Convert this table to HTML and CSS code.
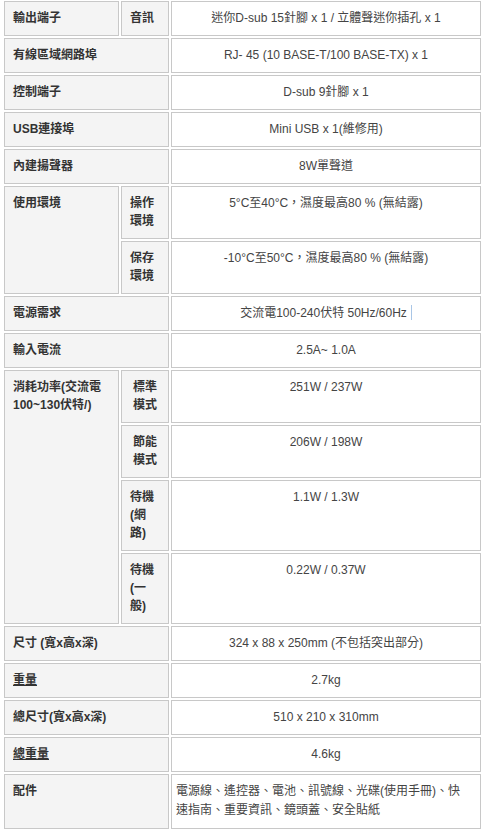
FILE: index.html
```html
<!DOCTYPE html>
<html lang="zh-Hant">
<head>
  <meta charset="UTF-8">
  <title>規格</title>
  <meta name="viewport" content="width=device-width, initial-scale=1.0">
  <link rel="stylesheet" href="styles.css">
</head>
<body>
  <table class="spec">
    <colgroup>
      <col class="c1">
      <col class="c2">
      <col>
    </colgroup>
    <tbody>
      <tr>
        <th>輸出端子</th>
        <th>音訊</th>
        <td>迷你D-sub 15針腳 x 1 / 立體聲迷你插孔 x 1</td>
      </tr>
      <tr>
        <th colspan="2">有線區域網路埠</th>
        <td>RJ- 45 (10 BASE-T/100 BASE-TX) x 1</td>
      </tr>
      <tr>
        <th colspan="2">控制端子</th>
        <td>D-sub 9針腳 x 1</td>
      </tr>
      <tr>
        <th colspan="2">USB連接埠</th>
        <td>Mini USB x 1(維修用)</td>
      </tr>
      <tr>
        <th colspan="2">內建揚聲器</th>
        <td>8W單聲道</td>
      </tr>
      <tr>
        <th rowspan="2">使用環境</th>
        <th>操作環境</th>
        <td>5°C至40°C，濕度最高80 % (無結露)</td>
      </tr>
      <tr>
        <th>保存環境</th>
        <td>-10°C至50°C，濕度最高80 % (無結露)</td>
      </tr>
      <tr>
        <th colspan="2">電源需求</th>
        <td>交流電100-240伏特 50Hz/60Hz<span class="caret"></span></td>
      </tr>
      <tr>
        <th colspan="2">輸入電流</th>
        <td>2.5A~ 1.0A</td>
      </tr>
      <tr>
        <th rowspan="4">消耗功率(交流電 100~130伏特/)</th>
        <th class="mid">標準模式</th>
        <td>251W / 237W</td>
      </tr>
      <tr>
        <th class="mid">節能模式</th>
        <td>206W / 198W</td>
      </tr>
      <tr>
        <th>待機(網路)</th>
        <td>1.1W / 1.3W</td>
      </tr>
      <tr>
        <th>待機(一般)</th>
        <td>0.22W / 0.37W</td>
      </tr>
      <tr>
        <th colspan="2">尺寸 (寬x高x深)</th>
        <td>324 x 88 x 250mm (不包括突出部分)</td>
      </tr>
      <tr>
        <th colspan="2"><u>重量</u></th>
        <td>2.7kg</td>
      </tr>
      <tr>
        <th colspan="2">總尺寸(寬x高x深)</th>
        <td>510 x 210 x 310mm</td>
      </tr>
      <tr>
        <th colspan="2"><u>總重量</u></th>
        <td>4.6kg</td>
      </tr>
      <tr>
        <th colspan="2">配件</th>
        <td class="list">電源線、遙控器、電池、訊號線、光碟(使用手冊)、快速指南、重要資訊、鏡頭蓋、安全貼紙</td>
      </tr>
    </tbody>
  </table>
</body>
</html>
```

FILE: styles.css
```css
body {
  margin: 0;
  background: #fff;
  font-family: 'Liberation Sans', Arial, 'Noto Sans CJK TC', sans-serif;
}
.spec {
  width: 481px;
  margin: -1px 0 0 2px;
  table-layout: fixed;
  border-collapse: separate;
  border-spacing: 2px;
  font-size: 12px;
  line-height: 18px;
}
.spec col.c1 { width: 115px; }
.spec col.c2 { width: 48px; }
.spec th, .spec td {
  border: 1px solid #c8c8c8;
  padding: 7px 8px 8px;
  vertical-align: top;
}
.spec th {
  background: #f4f4f4;
  color: #333;
  font-weight: bold;
  text-align: left;
}
.spec th.mid { text-align: center; }
.spec td {
  background: #fff;
  color: #444;
  text-align: center;
}
.spec td.list {
  text-align: left;
  padding-left: 4px;
  padding-right: 10px;
  line-height: 19px;
}
.caret {
  display: inline-block;
  width: 1px;
  height: 15px;
  margin-left: 4px;
  vertical-align: -3px;
  background: #a9c6e6;
}
```
